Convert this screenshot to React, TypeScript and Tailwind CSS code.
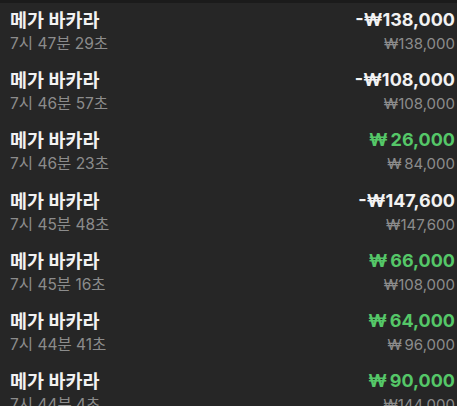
const rows = [
  { time: '7시 47분 29초', amount: '-₩138,000', win: false, bet: '₩138,000' },
  { time: '7시 46분 57초', amount: '-₩108,000', win: false, bet: '₩108,000' },
  { time: '7시 46분 23초', amount: '₩\u200926,000', win: true, bet: '₩\u200984,000' },
  { time: '7시 45분 48초', amount: '-₩147,600', win: false, bet: '₩147,600' },
  { time: '7시 45분 16초', amount: '₩\u200966,000', win: true, bet: '₩108,000' },
  { time: '7시 44분 41초', amount: '₩\u200964,000', win: true, bet: '₩\u200996,000' },
  { time: '7시 44분 4초', amount: '₩\u200990,000', win: true, bet: '₩144,000' },
]

export default function App() {
  return (
    <div
      className="h-[406px] w-[457px] overflow-hidden bg-[#262626] border-t-[3px] border-[#1b1b1b]"
      style={{ fontFamily: 'Inter, "Noto Sans CJK KR", sans-serif' }}
    >
      {rows.map((r, i) => (
        <div key={i} className="flex h-[60.2px] items-start justify-between pl-[10px] pr-[2px] pt-[4px]">
          <div className="flex flex-col">
            <span className="text-[18.5px] font-bold leading-[26px] text-[#f2f2f2]">메가 바카라</span>
            <span className="text-[15.5px] leading-[22px] text-[#8c8c8c]">{r.time}</span>
          </div>
          <div className="flex flex-col items-end">
            <span
              className={
                r.win
                  ? 'text-[18px] font-bold leading-[26px] text-[#55c768]'
                  : 'text-[18px] font-bold leading-[26px] text-[#f2f2f2]'
              }
            >
              {r.amount}
            </span>
            <span className="text-[15px] leading-[22px] text-[#8c8c8c]">{r.bet}</span>
          </div>
        </div>
      ))}
    </div>
  )
}
